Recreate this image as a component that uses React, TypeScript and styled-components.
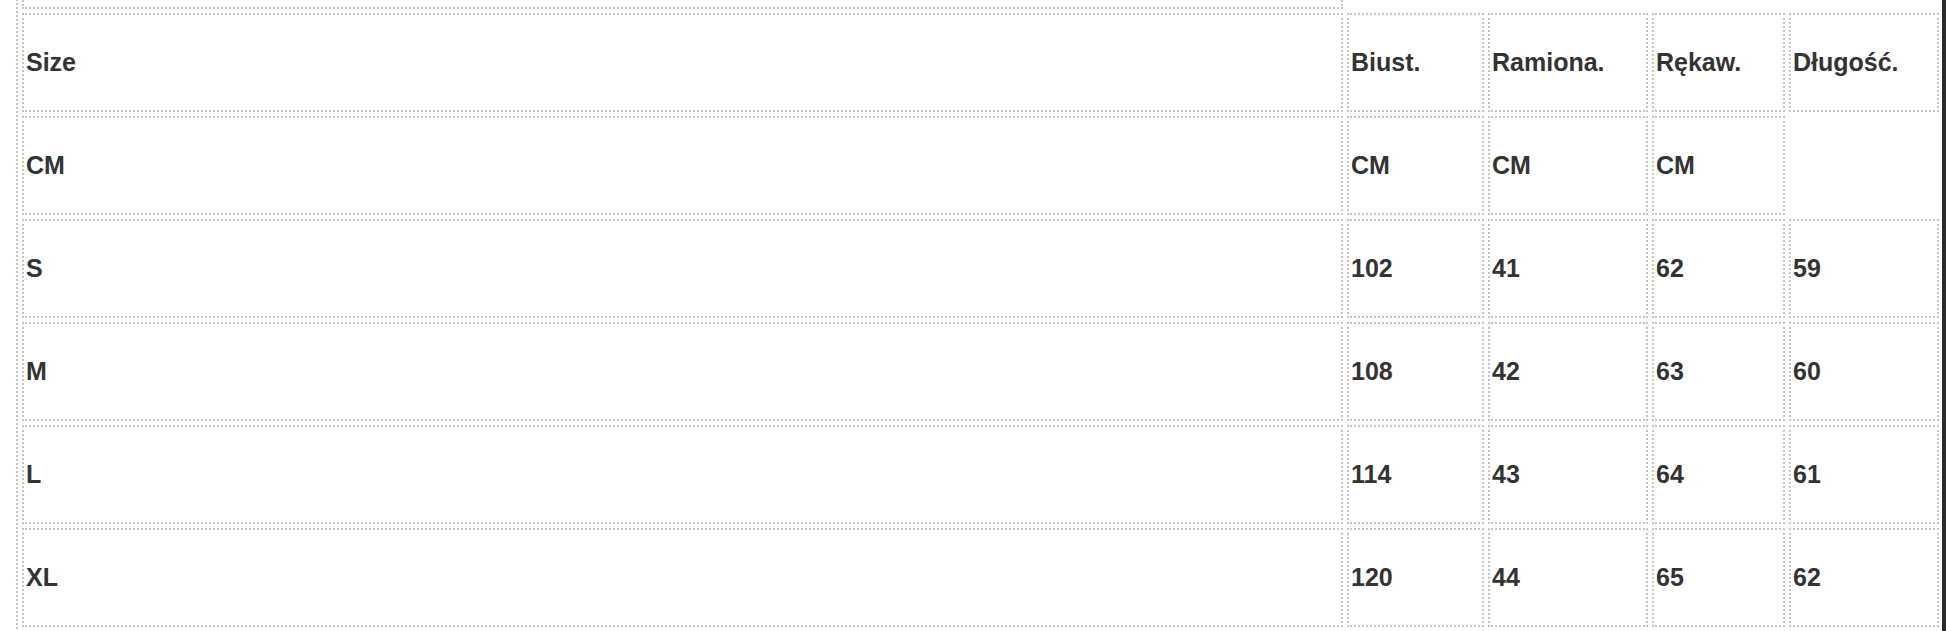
import React from "react";
import styled, { createGlobalStyle } from "styled-components";

type SizeRow = {
  label: string;
  values: string[];
};

const GlobalStyle = createGlobalStyle`
  html, body {
    margin: 0;
    padding: 0;
    background: #ffffff;
  }
`;

const Page = styled.div`
  display: flex;
  height: 631px;
  overflow: hidden;
  background: #ffffff;
`;

const ScrollArea = styled.div`
  flex: 1;
  overflow: hidden;
  padding-left: 16px;
`;

const ScrollEdge = styled.div`
  width: 4px;
  flex-shrink: 0;
  background: #2b2b2b;
`;

const SizeTable = styled.table`
  /* page is scrolled: the row above the header is mostly out of view */
  margin-top: -37px;
  width: 1929px;
  table-layout: fixed;
  border-collapse: separate;
  border-spacing: 4px;
  border: 2px dotted #c4c4c4;
  font-family: "Liberation Sans", Arial, Helvetica, sans-serif;
  font-size: 25px;
  font-weight: 700;
  color: #333333;
`;

const Cell = styled.td<{ $short?: boolean }>`
  box-sizing: border-box;
  height: ${(p) => (p.$short ? "40px" : "99px")};
  padding: 0 2px;
  border: 2px dotted #c4c4c4;
  vertical-align: middle;
  text-align: left;
  white-space: nowrap;
`;

const columnWidths = [1321, 137, 160, 133, 150];

const header = ["Size", "Biust.", "Ramiona.", "Rękaw.", "Długość."];

const rows: SizeRow[] = [
  { label: "CM", values: ["CM", "CM", "CM"] },
  { label: "S", values: ["102", "41", "62", "59"] },
  { label: "M", values: ["108", "42", "63", "60"] },
  { label: "L", values: ["114", "43", "64", "61"] },
  { label: "XL", values: ["120", "44", "65", "62"] },
];

const App = () => {
  return (
    <>
      <GlobalStyle />
      <Page>
        <ScrollArea>
          <SizeTable>
            <colgroup>
              {columnWidths.map((w, i) => (
                <col key={i} style={{ width: w }} />
              ))}
            </colgroup>
            <tbody>
              <tr>
                <Cell $short />
              </tr>
              <tr>
                {header.map((h) => (
                  <Cell key={h}>{h}</Cell>
                ))}
              </tr>
              {rows.map((row) => (
                <tr key={row.label}>
                  <Cell>{row.label}</Cell>
                  {row.values.map((v, i) => (
                    <Cell key={i}>{v}</Cell>
                  ))}
                </tr>
              ))}
            </tbody>
          </SizeTable>
        </ScrollArea>
        <ScrollEdge />
      </Page>
    </>
  );
};

export default App;
